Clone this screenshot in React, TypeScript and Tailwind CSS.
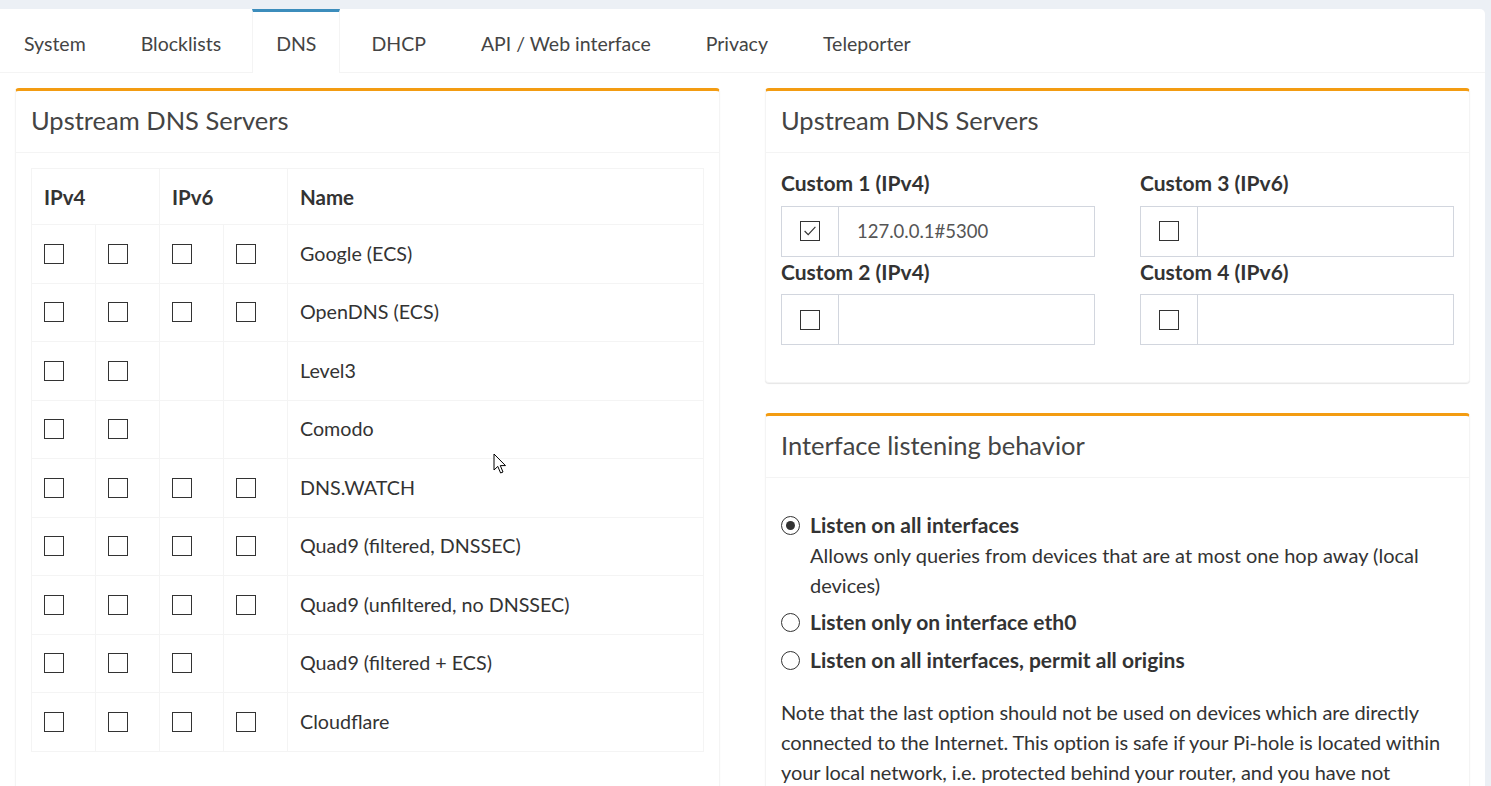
import React from 'react'

const tabs = ['System', 'Blocklists', 'DNS', 'DHCP', 'API / Web interface', 'Privacy', 'Teleporter']

const servers: { name: string; boxes: number }[] = [
    {name: 'Google (ECS)', boxes: 4},
    {name: 'OpenDNS (ECS)', boxes: 4},
    {name: 'Level3', boxes: 2},
    {name: 'Comodo', boxes: 2},
    {name: 'DNS.WATCH', boxes: 4},
    {name: 'Quad9 (filtered, DNSSEC)', boxes: 4},
    {name: 'Quad9 (unfiltered, no DNSSEC)', boxes: 4},
    {name: 'Quad9 (filtered + ECS)', boxes: 3},
    {name: 'Cloudflare', boxes: 4},
]

const Checkbox = ({checked = false}: { checked?: boolean }) => (
    <span className="flex h-5 w-5 items-center justify-center border-[1.5px] border-[#333] bg-white">
        {checked && (
            <svg viewBox="0 0 20 20" className="h-[18px] w-[18px]" fill="none" stroke="#333" strokeWidth="1.3">
                <polyline points="4,10 8,14 16,5.5"/>
            </svg>
        )}
    </span>
)

const Radio = ({checked = false}: { checked?: boolean }) => (
    <span className="mt-[5.5px] flex h-[19px] w-[19px] shrink-0 items-center justify-center rounded-full border-[1.5px] border-[#333] bg-white">
        {checked && <span className="h-[9px] w-[9px] rounded-full bg-[#333]"/>}
    </span>
)

const Box = ({title, children}: { title: string; children: React.ReactNode }) => (
    <div className="rounded-[4px] border-x border-b border-t-[3px] border-x-[#f4f4f4] border-b-[#f4f4f4] border-t-[#f39c12] bg-white shadow-[0_1px_1px_rgba(0,0,0,0.1)]">
        <div className="border-b border-[#f4f4f4] px-[15px] pb-[16px] pt-[14px]">
            <h3 className="text-[25.5px] leading-[31px] text-[#444]">{title}</h3>
        </div>
        <div className="p-[15px]">{children}</div>
    </div>
)

const CustomInput = ({label, value, checked}: { label: string; value?: string; checked?: boolean }) => (
    <>
        <label className="mb-[7.5px] block text-[21px] font-bold">{label}</label>
        <div className="flex h-[51px] border border-[#d2d6de]">
            <div className="flex w-[57px] items-center justify-center border-r border-[#d2d6de]">
                <Checkbox checked={checked}/>
            </div>
            <div className="flex flex-1 items-center px-[18px] text-[18.5px] text-[#555]">{value}</div>
        </div>
    </>
)

const App = () => {
    return (
        <div className="relative h-[786px] overflow-hidden bg-[#ecf0f5] pr-[6px] pt-[9px] font-['Source_Sans_Pro',Lato,sans-serif] text-[20px] leading-[30px] text-[#333]">
            <div className="h-full rounded-tr-[5px] bg-white">
                <nav className="flex border-b border-[#f4f4f4]">
                    {tabs.map((tab) => {
                        const active = tab === 'DNS'
                        return (
                            <div
                                key={tab}
                                className={`mr-[7px] border-x border-t-[3px] px-[23px] pb-[13px] pt-[17px] text-[19.5px] text-[#444] ${
                                    active
                                        ? '-mb-px border-x-[#f4f4f4] border-t-[#3c8dbc] bg-white'
                                        : 'border-x-transparent border-t-transparent'
                                }`}
                            >
                                {tab}
                            </div>
                        )
                    })}
                </nav>

                <div className="grid grid-cols-2 items-start gap-[45px] p-[15px]">
                    {/* left: predefined upstream servers */}
                    <Box title="Upstream DNS Servers">
                        <table className="w-full border-collapse text-[19.7px]">
                            <thead>
                                <tr className="h-[56px] text-[20.5px]">
                                    <th colSpan={2} className="border border-[#f4f4f4] px-3 text-left font-bold">IPv4</th>
                                    <th colSpan={2} className="border border-[#f4f4f4] px-3 text-left font-bold">IPv6</th>
                                    <th className="border border-[#f4f4f4] px-3 text-left font-bold">Name</th>
                                </tr>
                            </thead>
                            <tbody>
                                {servers.map((s) => (
                                    <tr key={s.name} className="h-[58.5px]">
                                        {[0, 1, 2, 3].map((i) => (
                                            <td key={i} className="w-[64px] border border-[#f4f4f4] px-3">
                                                {i < s.boxes && <Checkbox/>}
                                            </td>
                                        ))}
                                        <td className="border border-[#f4f4f4] px-3">{s.name}</td>
                                    </tr>
                                ))}
                            </tbody>
                        </table>
                        <div className="h-[60px]"/>
                    </Box>

                    <div className="flex flex-col gap-[30px]">
                        <Box title="Upstream DNS Servers">
                            <div className="mb-[22px] grid grid-cols-2 gap-x-[45px]">
                                <div>
                                    <CustomInput label="Custom 1 (IPv4)" value="127.0.0.1#5300" checked/>
                                    <CustomInput label="Custom 2 (IPv4)"/>
                                </div>
                                <div>
                                    <CustomInput label="Custom 3 (IPv6)"/>
                                    <CustomInput label="Custom 4 (IPv6)"/>
                                </div>
                            </div>
                        </Box>

                        <Box title="Interface listening behavior">
                            <div className="pt-[17px]">
                                <div className="flex gap-[10px]">
                                    <Radio checked/>
                                    <div>
                                        <div className="text-[21px] font-bold">Listen on all interfaces</div>
                                        <div>Allows only queries from devices that are at most one hop away (local devices)</div>
                                    </div>
                                </div>
                                <div className="mt-[7px] flex gap-[10px]">
                                    <Radio/>
                                    <div className="text-[21px] font-bold">Listen only on interface eth0</div>
                                </div>
                                <div className="mt-[8px] flex gap-[10px]">
                                    <Radio/>
                                    <div className="text-[21px] font-bold">Listen on all interfaces, permit all origins</div>
                                </div>
                                <p className="mt-[22px] tracking-[-0.1px]">
                                    Note that the last option should not be used on devices which are directly connected to
                                    the Internet. This option is safe if your Pi-hole is located within your local network,
                                    i.e. protected behind your router, and you have not forwarded port 53 to this device.
                                </p>
                            </div>
                        </Box>
                    </div>
                </div>
            </div>

            {/* mouse pointer */}
            <svg className="absolute left-[493px] top-[453px]" width="14" height="22" viewBox="0 0 14 22">
                <path d="M1 1 L1 17 L4.8 13.4 L7.6 20 L10 19 L7.3 12.6 L12.5 12.6 Z" fill="#fff" stroke="#000"
                      strokeWidth="1" strokeLinejoin="round"/>
            </svg>
        </div>
    )
}

export default App
